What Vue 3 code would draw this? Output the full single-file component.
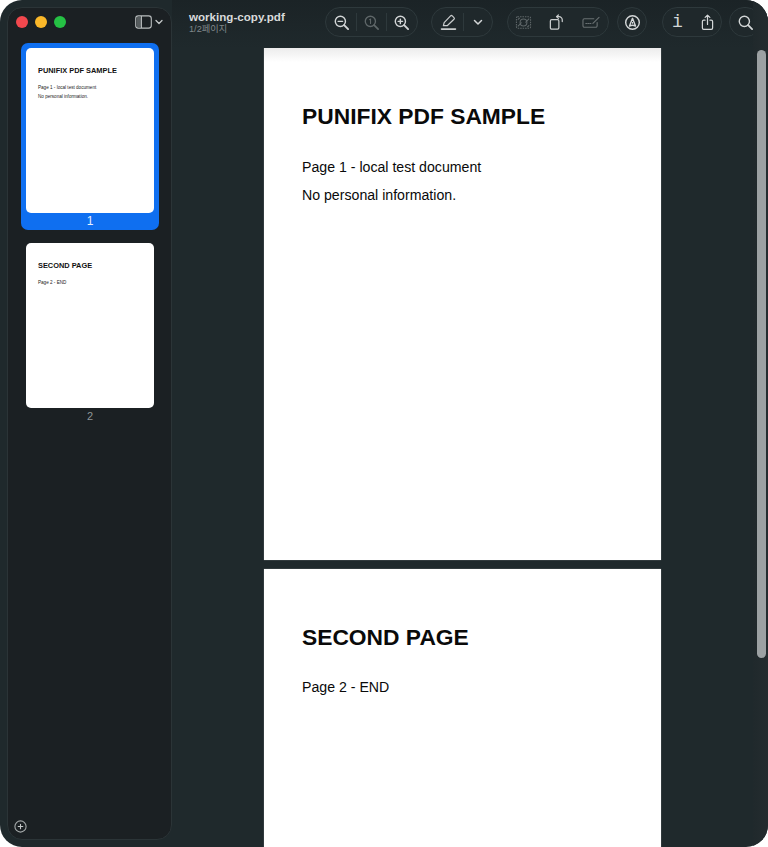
<script setup>
const thumbs = [
  { num: 1, title: 'PUNIFIX PDF SAMPLE', lines: ['Page 1 - local test document', 'No personal information.'], selected: true },
  { num: 2, title: 'SECOND PAGE', lines: ['Page 2 - END'], selected: false },
]
</script>

<template>
  <div class="window">
    <aside class="sidebar">
      <div class="sidebar-head">
        <div class="lights">
          <span class="light red"></span>
          <span class="light yellow"></span>
          <span class="light green"></span>
        </div>
        <div class="view-toggle">
          <svg width="17" height="14" viewBox="0 0 17 14" fill="none">
            <rect x="0.7" y="0.9" width="15.6" height="12.2" rx="2.6" stroke="#b9bdbe" stroke-width="1.1" />
            <rect x="1.5" y="1.7" width="4.5" height="10.6" rx="1.5" fill="#565c5e" />
            <path d="M6.4 1v12" stroke="#b9bdbe" stroke-width="1.1" />
          </svg>
          <svg width="8" height="6" viewBox="0 0 8 6" fill="none">
            <path d="M1 1.5l3 3 3-3" stroke="#c4c8c9" stroke-width="1.3" stroke-linecap="round" stroke-linejoin="round" />
          </svg>
        </div>
      </div>

      <div class="thumb-list">
        <div v-for="t in thumbs" :key="t.num" class="thumb" :class="{ selected: t.selected }">
          <div class="thumb-page">
            <div class="thumb-title">{{ t.title }}</div>
            <div v-for="line in t.lines" :key="line" class="thumb-line">{{ line }}</div>
          </div>
          <div class="thumb-num">{{ t.num }}</div>
        </div>
      </div>

      <button class="add-btn" aria-label="add">
        <svg width="13" height="13" viewBox="0 0 13 13" fill="none">
          <circle cx="6.5" cy="6.5" r="5.6" stroke="#a4a8a9" stroke-width="1.1" />
          <path d="M6.5 4.2v4.6M4.2 6.5h4.6" stroke="#c4c7c8" stroke-width="1.1" stroke-linecap="round" />
        </svg>
      </button>
    </aside>

    <main class="main">
      <header class="toolbar">
        <div class="doc-name">
          <div class="file">working-copy.pdf</div>
          <div class="pages">1/2페이지</div>
        </div>

        <div class="pill zoom-group">
          <svg class="ico" viewBox="0 0 18 18" fill="none" stroke="#d3d6d7" stroke-width="1.5" stroke-linecap="round">
            <circle cx="7.8" cy="7.8" r="5.4" />
            <path d="M11.8 11.8L16 16" stroke-width="2" />
            <path d="M5.4 7.8h4.8" />
          </svg>
          <i class="sep"></i>
          <svg class="ico" viewBox="0 0 18 18" fill="none" stroke="#5f6769" stroke-width="1.4" stroke-linecap="round">
            <circle cx="7.8" cy="7.8" r="5.4" />
            <path d="M11.8 11.8L16 16" stroke-width="1.8" />
            <path d="M7 6l1-.6v4.6" stroke-width="1.1" />
          </svg>
          <i class="sep"></i>
          <svg class="ico" viewBox="0 0 18 18" fill="none" stroke="#d3d6d7" stroke-width="1.5" stroke-linecap="round">
            <circle cx="7.8" cy="7.8" r="5.4" />
            <path d="M11.8 11.8L16 16" stroke-width="2" />
            <path d="M5.4 7.8h4.8M7.8 5.4v4.8" />
          </svg>
        </div>

        <div class="pill markup-group">
          <svg class="ico" viewBox="0 0 18 18" fill="none" stroke="#c9cccd" stroke-width="1.3" stroke-linejoin="round">
            <path d="M3.6 12.4l.8-3.2L11.2 2a1.3 1.3 0 0 1 1.8 0l1.8 1.8a1.3 1.3 0 0 1 0 1.8L7.6 12.4z" />
            <path d="M1.6 16h14.8" stroke-width="1.7" stroke-linecap="round" />
          </svg>
          <i class="sep"></i>
          <svg class="chev" viewBox="0 0 10 7" fill="none">
            <path d="M1.5 1.5L5 5l3.5-3.5" stroke="#d3d6d7" stroke-width="1.5" stroke-linecap="round" stroke-linejoin="round" />
          </svg>
        </div>

        <div class="pill edit-group">
          <svg class="ico" viewBox="0 0 18 18" fill="none" stroke="#5f6769" stroke-width="1.1">
            <rect x="1.5" y="3" width="15" height="12" rx="1.2" stroke-dasharray="1.6 1" />
            <circle cx="9" cy="9" r="3.6" />
            <path d="M3 13l4-4M15 5l-4 4M5 4L3 6M15 12l-2 2" />
          </svg>
          <svg class="ico" viewBox="0 0 18 18" fill="none" stroke="#c9cccd" stroke-width="1.3" stroke-linecap="round" stroke-linejoin="round">
            <rect x="2.5" y="6" width="9" height="10" rx="1.4" />
            <path d="M9.5 2.8h2.2a3.4 3.4 0 0 1 3.4 3.4V8" />
            <path d="M11 1L9 2.8l2 1.8" />
          </svg>
          <svg class="ico wide" viewBox="0 0 20 18" fill="none" stroke="#686f71" stroke-width="1.2" stroke-linecap="round">
            <path d="M13 5H3a1.5 1.5 0 0 0-1.5 1.5v6A1.5 1.5 0 0 0 3 14h12a1.5 1.5 0 0 0 1.5-1.5V9" />
            <path d="M4.5 10h6" stroke-dasharray="1 1.2" />
            <path d="M12 10l6.5-6.5" />
          </svg>
        </div>

        <div class="pill round markup-circle">
          <svg class="ico" viewBox="0 0 18 18" fill="none" stroke="#d3d6d7" stroke-width="1.5" stroke-linejoin="round">
            <circle cx="9" cy="9" r="7.2" />
            <path d="M5.8 12.8L9 4.6l3.2 8.2c-2-1.2-4.4-1.2-6.4 0z" />
            <path d="M9 8.4v2" stroke-width="1.1" />
          </svg>
        </div>

        <div class="pill info-group">
          <span class="info">i</span>
          <svg class="ico" viewBox="0 0 18 18" fill="none" stroke="#d3d6d7" stroke-width="1.3" stroke-linecap="round" stroke-linejoin="round">
            <path d="M6.4 6.5H5a1.4 1.4 0 0 0-1.4 1.4v7A1.4 1.4 0 0 0 5 16.3h8a1.4 1.4 0 0 0 1.4-1.4v-7A1.4 1.4 0 0 0 13 6.5h-1.4" />
            <path d="M9 11V1.4M6.5 3.6L9 1.2l2.5 2.4" />
          </svg>
        </div>

        <div class="pill round search-circle">
          <svg class="ico" viewBox="0 0 18 18" fill="none" stroke="#d3d6d7" stroke-width="1.5" stroke-linecap="round">
            <circle cx="7.8" cy="7.8" r="5.4" />
            <path d="M11.8 11.8L16 16" stroke-width="1.9" />
          </svg>
        </div>
      </header>

      <section class="doc">
        <article class="page first">
          <h1>PUNIFIX PDF SAMPLE</h1>
          <p>Page 1 - local test document</p>
          <p>No personal information.</p>
        </article>
        <article class="page second">
          <h1>SECOND PAGE</h1>
          <p>Page 2 - END</p>
        </article>
        <div class="scrollbar"><div class="scroll-thumb"></div></div>
      </section>
    </main>
  </div>
</template>

<style>
html,
body {
  margin: 0;
  background: #fff;
}
</style>

<style scoped>
.window {
  width: 768px;
  height: 847px;
  display: flex;
  overflow: hidden;
  border-radius: 22px;
  background: #1f292c;
  font-family: "Liberation Sans", Arial, sans-serif;
}

.sidebar {
  flex: none;
  width: 165px;
  height: 833px;
  margin: 7px 0 0 7px;
  box-sizing: border-box;
  display: flex;
  flex-direction: column;
  background: #1b2023;
  border: 1px solid #2b3437;
  border-radius: 15px;
}

.sidebar-head {
  height: 28px;
  display: flex;
  align-items: center;
  justify-content: space-between;
  padding: 0 8px;
  flex: none;
}

.lights {
  display: flex;
  gap: 7px;
}

.light {
  width: 12px;
  height: 12px;
  border-radius: 50%;
}

.red { background: #f2484e; }
.yellow { background: #fbb829; }
.green { background: #25c144; }

.view-toggle {
  display: flex;
  align-items: center;
  gap: 3px;
}

.thumb-list {
  display: flex;
  flex-direction: column;
  gap: 8px;
  padding: 7px 0 0 13px;
}

.thumb {
  width: 138px;
  box-sizing: border-box;
  padding: 5px 5px 0;
  border-radius: 7px;
  height: 187px;
}

.thumb.selected {
  background: #0f6ff0;
}

.thumb-page {
  height: 165px;
  box-sizing: border-box;
  padding: 18px 12px 0;
  background: #fff;
  border-radius: 5px;
  color: #111;
}

.thumb-title {
  font-size: 7.4px;
  font-weight: 700;
  line-height: 10px;
  margin-bottom: 7px;
  white-space: nowrap;
}

.thumb-line {
  font-size: 4.6px;
  line-height: 9px;
  white-space: nowrap;
  color: #222;
}

.thumb-num {
  height: 17px;
  line-height: 17px;
  text-align: center;
  font-size: 11px;
  color: #8f9597;
}

.thumb.selected .thumb-num {
  color: #e6f0ff;
  font-size: 12px;
}

.add-btn {
  margin: auto 0 6px 6px;
  padding: 0;
  width: 13px;
  height: 13px;
  border: 0;
  background: none;
  display: flex;
}

.main {
  flex: 1;
  min-width: 0;
  display: flex;
  flex-direction: column;
  position: relative;
}

.toolbar {
  flex: none;
  height: 48px;
  box-sizing: border-box;
  padding: 7px 7px 0 17px;
  display: flex;
  align-items: flex-start;
  background: linear-gradient(#1b2326, #1f292c);
}

.doc-name {
  width: 136px;
  padding-top: 3px;
  flex: none;
}

.file {
  font-size: 11.6px;
  line-height: 13px;
  font-weight: 700;
  color: #d8dadb;
  white-space: nowrap;
}

.pages {
  font-size: 9.2px;
  line-height: 12px;
  color: #80878a;
  font-family: "Liberation Sans", "Noto Sans CJK KR", sans-serif;
  white-space: nowrap;
}

.pill {
  flex: none;
  box-sizing: border-box;
  height: 30px;
  border: 1px solid #2e393c;
  border-radius: 15px;
  display: flex;
  align-items: center;
  justify-content: center;
  background: #1f282b;
}

.ico {
  width: 17px;
  height: 17px;
  flex: none;
}

.ico.wide {
  width: 20px;
}

.chev {
  width: 10px;
  height: 7px;
  margin-left: 3px;
}

.sep {
  width: 1px;
  height: 18px;
  background: #2e393c;
}

.zoom-group { width: 93px; gap: 6px; }
.markup-group { width: 62px; margin-left: 13px; gap: 6px; padding-right: 2px; }
.edit-group { width: 102px; margin-left: 14px; gap: 16px; }
.markup-circle { width: 30px; margin-left: 8px; }
.info-group { width: 60px; margin-left: 15px; gap: 15px; padding-left: 3px; }
.search-circle { width: 32px; margin-left: 7px; }

.info {
  width: 12px;
  text-align: center;
  font-family: "Liberation Mono", monospace;
  font-size: 18px;
  color: #d3d6d7;
  line-height: 18px;
}

.doc {
  flex: 1;
  min-height: 0;
  overflow: hidden;
  padding-right: 15px;
  display: flex;
  flex-direction: column;
  align-items: center;
  gap: 9px;
}

.page {
  flex: none;
  width: 397px;
  box-sizing: border-box;
  padding: 0 38px;
  background: #fff;
  color: #0a0a0a;
  box-shadow: 0 0 1px #8c9193;
}

.page.first {
  height: 512px;
  padding-top: 54px;
  background: linear-gradient(#ececec, #fff 14px);
}

.page.second {
  height: 400px;
  padding-top: 54px;
}

.page h1 {
  margin: 0 0 28px;
  font-size: 22.8px;
  line-height: 28px;
  font-weight: 700;
  white-space: nowrap;
}

.page.second h1 {
  margin-bottom: 27px;
}

.page p {
  margin: 0 0 10px;
  font-size: 14.15px;
  line-height: 18px;
  white-space: nowrap;
}

.scrollbar {
  position: absolute;
  top: 0;
  bottom: 0;
  right: 0;
  width: 15px;
  background: linear-gradient(90deg, #20292c, #242c2f);
}

.scroll-thumb {
  position: absolute;
  top: 50px;
  left: 4px;
  width: 9px;
  height: 608px;
  border-radius: 5px;
  background: #9ca1a3;
}
</style>
